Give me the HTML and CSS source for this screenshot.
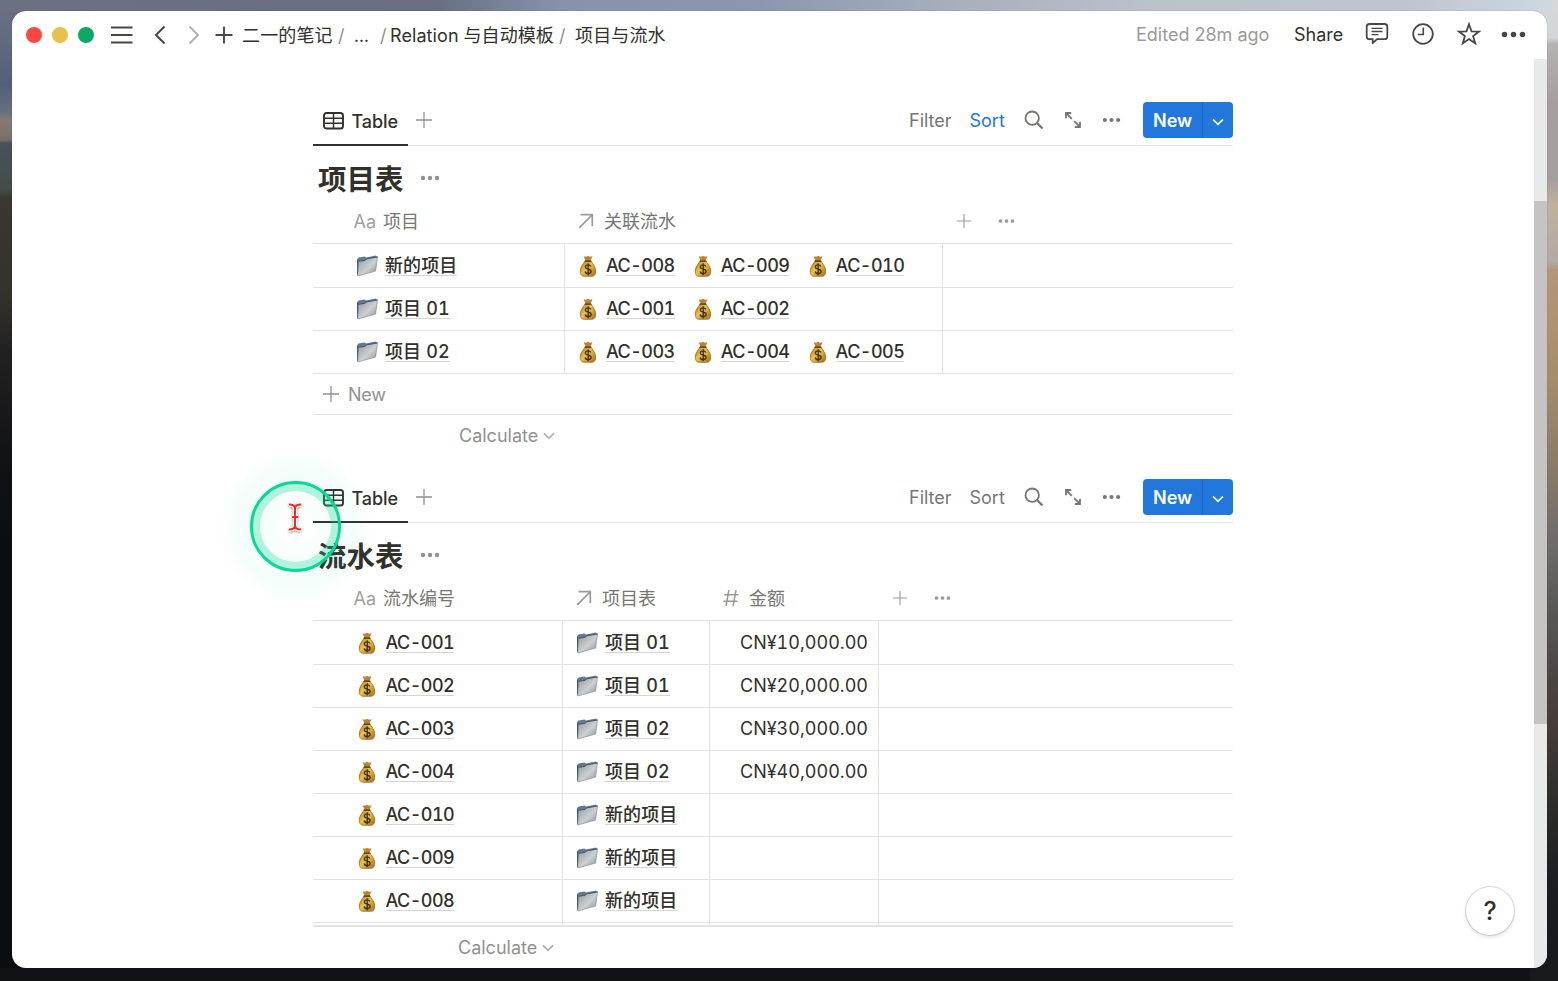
FILE: index.html
```html
<!DOCTYPE html>
<html lang="zh-CN">
<head>
<meta charset="utf-8">
<title>项目与流水</title>
<link rel="stylesheet" href="styles.css">
</head>
<body>
<svg class="defs" width="0" height="0">
  <defs>
    <linearGradient id="gold" x1="0" y1="0" x2="1" y2="1"><stop offset="0" stop-color="#b87a17"/><stop offset=".45" stop-color="#efc140"/><stop offset="1" stop-color="#a96a12"/></linearGradient>
    <linearGradient id="steel" x1="0" y1="0" x2="1" y2="1"><stop offset="0" stop-color="#8f989f"/><stop offset=".55" stop-color="#cdcfd0"/><stop offset="1" stop-color="#878e93"/></linearGradient>
    <symbol id="bag" viewBox="0 0 18 22"><path d="M4.600 1.200 7 1.800 9 .8l2 1 2.600-.5L11.300 6H6.700z" fill="#b98532"/><path d="M6.300 5.600h5.400c1 2.400 5 5.800 5 10.400 0 3.800-1.500 5.300-4 5.300H5.300c-2.500 0-4-1.500-4-5.300 0-4.600 4-8 5-10.400z" fill="url(#gold)" stroke="#9c6719" stroke-width=".8"/><path d="M5.800 6.200h6.400" stroke="#704512" stroke-width="1.600"/><path d="M11.800 11.500c-.4-1.100-1.500-1.700-2.700-1.700-1.500 0-2.700.8-2.700 2.100 0 3 5.700 1.500 5.700 4.400 0 1.400-1.300 2.300-2.900 2.300-1.600 0-2.700-.7-3-2.100M9.200 8.300v12" fill="none" stroke="#33312d" stroke-width="1.300"/></symbol>
    <symbol id="folder" viewBox="0 0 22 22"><path d="M1 4.200 2.500 2.500l6-1 1.500 1 10-2 1 1.500v3L1.600 19z" fill="#64788f"/><path d="M1 4.400v16L2.600 19V6z" fill="#405266"/><path d="M2.500 6.200 9 5.400l1.200-1.500 11.300-2-1.900 14.200L1.700 21z" fill="url(#steel)" stroke="#77838c" stroke-width=".6"/><path d="M2.500 6.200 9 5.400l1.200-1.500 11.300-2" fill="none" stroke="#415874" stroke-width="1"/></symbol>
    <symbol id="table" viewBox="0 0 22 18"><rect x="1" y="1" width="19" height="15.500" rx="2.600" fill="none" stroke="currentColor" stroke-width="1.900"/><path d="M1 6.200h19M1 11.300h19M10.500 1v15.500" fill="none" stroke="currentColor" stroke-width="1.500"/></symbol>
    <symbol id="plus" viewBox="0 0 16 16"><path d="M8 0v16M0 8h16" fill="none" stroke="currentColor" stroke-width="1.300"/></symbol>
    <symbol id="dots" viewBox="0 0 20 6"><circle cx="3" cy="3" r="2.200"/><circle cx="10" cy="3" r="2.200"/><circle cx="17" cy="3" r="2.200"/></symbol>
    <symbol id="search" viewBox="0 0 20 20"><circle cx="8.200" cy="8.200" r="6.700" fill="none" stroke="currentColor" stroke-width="1.800"/><path d="m13 13 5.500 5.500" stroke="currentColor" stroke-width="2.300"/></symbol>
    <symbol id="expand" viewBox="0 0 18 18"><path d="M2 7.200V2h5.200M2 2l5.800 5.800M10.800 16h5.200v-5.200M16 16l-5.800-5.800" fill="none" stroke="currentColor" stroke-width="1.800"/></symbol>
    <symbol id="chev" viewBox="0 0 12 8"><path d="m1 1.300 5 5 5-5" fill="none" stroke="currentColor" stroke-width="1.700"/></symbol>
    <symbol id="rel" viewBox="0 0 16 16"><path d="M1.200 14.800 14 2M2.500 1.700H14.300V13" fill="none" stroke="currentColor" stroke-width="1.700"/></symbol>
    <symbol id="num" viewBox="0 0 16 18"><path d="M5.900 1 3 17M13 1l-2.900 16M1.300 5.700h14M.5 12.300h14" fill="none" stroke="currentColor" stroke-width="1.500"/></symbol>
  </defs>
</svg>
<main class="window">
  <header class="topbar">
    <div class="lights"><i class="light red"></i><i class="light yellow"></i><i class="light green"></i></div>
    <svg class="menu" width="22" height="20" viewBox="0 0 22 20"><path d="M0 2.500h21.500M0 10h21.500M0 17.500h21.500" stroke="currentColor" stroke-width="1.900"/></svg>
    <svg class="back" width="12" height="20" viewBox="0 0 12 20"><path d="M10.500 1.500 2 10l8.500 8.500" fill="none" stroke="currentColor" stroke-width="2"/></svg>
    <svg class="forward" width="12" height="20" viewBox="0 0 12 20"><path d="M1.500 1.500 10 10l-8.500 8.500" fill="none" stroke="currentColor" stroke-width="2"/></svg>
    <svg class="add" width="18" height="18" viewBox="0 0 18 18"><path d="M9 .5v17M.5 9h17" stroke="currentColor" stroke-width="1.900"/></svg>
    <nav class="crumbs"><span class="c1">二一的笔记</span><span class="slash s1">/</span><span class="c2">...</span><span class="slash s2">/</span><span class="c3">Relation 与自动模板</span><span class="slash s3">/</span><span>项目与流水</span></nav>
    <div class="actions">
      <span class="edited">Edited 28m ago</span><span class="share">Share</span>
      <svg class="comment" width="24" height="24" viewBox="0 0 24 24"><path d="M4.500 2h15A2.800 2.800 0 0 1 22.300 4.800v9.600a2.800 2.800 0 0 1-2.800 2.800H12l-4.300 4v-4H4.500a2.800 2.800 0 0 1-2.800-2.800V4.800A2.800 2.800 0 0 1 4.500 2z" fill="none" stroke="currentColor" stroke-width="1.800" stroke-linejoin="round"/><path d="M6.500 6.300h11M6.500 9.500h11M6.500 12.700h7" stroke="currentColor" stroke-width="1.300"/></svg>
      <svg class="clock" width="24" height="24" viewBox="0 0 24 24"><circle cx="12" cy="12" r="9.800" fill="none" stroke="currentColor" stroke-width="1.800"/><path d="M12.300 5.500v7H6.800" fill="none" stroke="currentColor" stroke-width="1.600"/></svg>
      <svg class="star" width="24" height="24" viewBox="0 0 24 24"><path d="m12 2.200 2.500 7.100 7.600.2-6 4.600 2.100 7.200-6.200-4.200-6.200 4.200 2.100-7.200-6-4.600 7.600-.2z" fill="none" stroke="currentColor" stroke-width="1.800"/></svg>
      <svg class="more" width="25" height="7" viewBox="0 0 25 7"><circle cx="3.500" cy="3.500" r="2.800"/><circle cx="12.500" cy="3.500" r="2.800"/><circle cx="21.500" cy="3.500" r="2.800"/></svg>
    </div>
  </header>
  <div class="scroller">
    <div class="page">
      <section class="db projects">
        <div class="viewbar">
          <div class="tab"><svg width="22" height="18"><use href="#table"/></svg><span>Table</span></div><svg class="addview" width="16" height="16"><use href="#plus"/></svg>
          <div class="tools"><span class="filter">Filter</span><span class="sort active">Sort</span><svg class="t-search" width="20" height="20"><use href="#search"/></svg><svg class="t-expand" width="18" height="18"><use href="#expand"/></svg><svg class="t-dots" width="19" height="6"><use href="#dots"/></svg><div class="new"><b>New</b><span><svg width="12" height="8"><use href="#chev"/></svg></span></div></div>
        </div>
        <h2 class="title"><span>项目表</span><svg width="20" height="6"><use href="#dots"/></svg></h2>
        <div class="row head"><div class="name"><em>Aa</em><span>项目</span></div><div class="hc"><svg width="16" height="16"><use href="#rel"/></svg><span>关联流水</span></div><div class="extra"><svg width="14" height="14"><use href="#plus"/></svg><svg width="17" height="6"><use href="#dots"/></svg></div></div>
        <div class="row first"><div class="name"><svg class="fold"><use href="#folder"/></svg><a>新的项目</a></div><div class="rels"><p><svg class="bag"><use href="#bag"/></svg><a>AC-008</a></p><p><svg class="bag"><use href="#bag"/></svg><a>AC-009</a></p><p><svg class="bag"><use href="#bag"/></svg><a>AC-010</a></p></div><div></div></div>
        <div class="row"><div class="name"><svg class="fold"><use href="#folder"/></svg><a>项目 01</a></div><div class="rels"><p><svg class="bag"><use href="#bag"/></svg><a>AC-001</a></p><p><svg class="bag"><use href="#bag"/></svg><a>AC-002</a></p></div><div></div></div>
        <div class="row"><div class="name"><svg class="fold"><use href="#folder"/></svg><a>项目 02</a></div><div class="rels"><p><svg class="bag"><use href="#bag"/></svg><a>AC-003</a></p><p><svg class="bag"><use href="#bag"/></svg><a>AC-004</a></p><p><svg class="bag"><use href="#bag"/></svg><a>AC-005</a></p></div><div></div></div>
        <div class="newrow"><svg width="16" height="16"><use href="#plus"/></svg><span>New</span></div>
        <div class="calc"><span>Calculate</span><svg width="12" height="8"><use href="#chev"/></svg></div>
      </section>
      <section class="db flows">
        <div class="viewbar">
          <div class="tab"><svg width="22" height="18"><use href="#table"/></svg><span>Table</span></div><svg class="addview" width="16" height="16"><use href="#plus"/></svg>
          <div class="tools"><span class="filter">Filter</span><span class="sort">Sort</span><svg class="t-search" width="20" height="20"><use href="#search"/></svg><svg class="t-expand" width="18" height="18"><use href="#expand"/></svg><svg class="t-dots" width="19" height="6"><use href="#dots"/></svg><div class="new"><b>New</b><span><svg width="12" height="8"><use href="#chev"/></svg></span></div></div>
        </div>
        <h2 class="title"><span>流水表</span><svg width="20" height="6"><use href="#dots"/></svg></h2>
        <div class="row head"><div class="name"><em>Aa</em><span>流水编号</span></div><div class="hc"><svg width="16" height="16"><use href="#rel"/></svg><span>项目表</span></div><div class="hc"><svg width="16" height="18"><use href="#num"/></svg><span>金额</span></div><div class="extra"><svg width="14" height="14"><use href="#plus"/></svg><svg width="17" height="6"><use href="#dots"/></svg></div></div>
        <div class="row first"><div class="name"><svg class="bag"><use href="#bag"/></svg><a>AC-001</a></div><div class="rel"><svg class="fold"><use href="#folder"/></svg><a>项目 01</a></div><div class="amt">CN¥10,000.00</div><div></div></div>
        <div class="row"><div class="name"><svg class="bag"><use href="#bag"/></svg><a>AC-002</a></div><div class="rel"><svg class="fold"><use href="#folder"/></svg><a>项目 01</a></div><div class="amt">CN¥20,000.00</div><div></div></div>
        <div class="row"><div class="name"><svg class="bag"><use href="#bag"/></svg><a>AC-003</a></div><div class="rel"><svg class="fold"><use href="#folder"/></svg><a>项目 02</a></div><div class="amt">CN¥30,000.00</div><div></div></div>
        <div class="row"><div class="name"><svg class="bag"><use href="#bag"/></svg><a>AC-004</a></div><div class="rel"><svg class="fold"><use href="#folder"/></svg><a>项目 02</a></div><div class="amt">CN¥40,000.00</div><div></div></div>
        <div class="row"><div class="name"><svg class="bag"><use href="#bag"/></svg><a>AC-010</a></div><div class="rel"><svg class="fold"><use href="#folder"/></svg><a>新的项目</a></div><div class="amt"></div><div></div></div>
        <div class="row"><div class="name"><svg class="bag"><use href="#bag"/></svg><a>AC-009</a></div><div class="rel"><svg class="fold"><use href="#folder"/></svg><a>新的项目</a></div><div class="amt"></div><div></div></div>
        <div class="row"><div class="name"><svg class="bag"><use href="#bag"/></svg><a>AC-008</a></div><div class="rel"><svg class="fold"><use href="#folder"/></svg><a>新的项目</a></div><div class="amt"></div><div></div></div>
        <div class="row cut"><div class="name"></div><div class="rel"></div><div class="amt"></div><div></div></div>
        <div class="calc"><span>Calculate</span><svg width="12" height="8"><use href="#chev"/></svg></div>
      </section>
    </div>
    <div class="track"><div class="thumb"></div></div>
  </div>
  <button class="help">?</button>
</main>
<div class="halo"></div>
<div class="pointer"><svg width="18" height="32" viewBox="0 0 18 32"><path d="M3 2.500c3 0 6 1 6 4 0-3 3-4 6-4M9 6v20M3 27.500c3 0 6-1 6-4 0 3 3 4 6 4M6 15h6" fill="none" stroke="#fff" stroke-width="4.500"/><path d="M3 2.500c3 0 6 1 6 4 0-3 3-4 6-4M9 6v20M3 27.500c3 0 6-1 6-4 0 3 3 4 6 4M6 15h6" fill="none" stroke="#f5291d" stroke-width="2"/></svg></div>
</body>
</html>
```

FILE: styles.css
```css
* { box-sizing: border-box; }
body {
  margin: 0; width: 1558px; height: 981px; overflow: hidden; padding: 11px 11px 13px 12px;
  font-family: Inter, "Noto Sans CJK SC", sans-serif; font-size: 18px; color: #32302c;
  font-variant-numeric: tabular-nums;
  background:
    linear-gradient(90deg, #6b7183 0, #697083 440px, #8693ac 560px, #8a97ae 760px, #a7afbd 950px, #bcc1ca 1150px, #bfc4ce 1400px, #c9d5e2 1530px, #d5d9dc 1558px) 0 0 / 100% 12px no-repeat,
    linear-gradient(#101216, #101216) 0 100% / 1530px 13px no-repeat,
    linear-gradient(180deg, #6b7183 0, #606b80 40px, #50607a 85px, #68707d 112px, #857b73 120px, #776f68 140px, #47535a 143px, #454c49 190px, #39372f 198px, #34332b 290px, #222122 350px, #121315 450px, #0b0e11 540px) 0 0 / 30px 981px no-repeat,
    linear-gradient(180deg, #d5d9dc 0, #d3d5d6 38px, #b5b2b2 44px, #a79f9f 100px, #a59fa0 180px, #c0b19c 205px, #b3a8a6 262px, #b4977a 270px, #a58c6c 380px, #8b7c66 460px, #706c6b 540px, #5a5a59 600px, #4b4542 680px, #443b39 730px, #302f2b 790px, #1d1e22 880px, #18191d 960px) 100% 0 / 30px 981px no-repeat,
    #101216;
}
svg { display: block; flex: none; fill: currentColor; overflow: visible; }
.defs { position: absolute; }
.window { position: relative; height: 957px; background: #fff; border-radius: 14px; overflow: hidden; box-shadow: 0 0 1px #0008; display: flex; flex-direction: column; }
.topbar { height: 48px; flex: none; display: flex; align-items: center; padding-left: 14px; }
.lights { display: flex; gap: 10px; }
.light { width: 16px; height: 16px; border-radius: 50%; }
.red { background: #fe4740; } .yellow { background: #e8c04c; } .green { background: #0ba968; }
.menu, .back, .forward, .add { color: #484744; }
.menu { margin-left: 17px; }
.back { margin-left: 21px; }
.forward { margin-left: 22px; color: #b2b1af; }
.add { margin-left: 15px; }
.crumbs { display: flex; align-items: center; margin-left: 9px; padding-top: 2px; white-space: nowrap; letter-spacing: .15px; }
.crumbs span { line-height: 24px; }
.crumbs .slash { color: #91908d; }
.c1 { width: 96px; } .s1 { width: 16px; } .c2 { width: 26px; } .s2 { width: 10px; } .c3 { width: 169px; letter-spacing: .08px; } .s3 { width: 16px; }
.actions { margin-left: auto; display: flex; align-items: center; padding: 0 21px 2px 0; font-variant-numeric: normal; }
.edited { color: #9b9a97; width: 158px; white-space: nowrap; }
.share { width: 71px; }
.comment, .clock, .star, .more { color: #484744; }
.clock { margin-left: 22px; } .star { margin-left: 22px; } .more { margin-left: 20px; }
.scroller { flex: 1; display: flex; justify-content: space-between; min-height: 0; }
.page { margin-left: 301px; width: 920px; padding-top: 36px; }
.track { width: 13px; background: #e8eae9; padding-top: 142px; }
.thumb { height: 523px; background: #c6c4c3; }
.db { height: 377px; }
.viewbar { height: 51px; display: flex; align-items: center; border-bottom: 1px solid #e4e4e3; }
.tab { width: 95px; height: 51px; display: flex; align-items: center; gap: 6.500px; padding-left: 10px; border-bottom: 2px solid #32302c; margin-bottom: -1px; font-weight: 500; letter-spacing: -.1px; }
.tab svg { margin-top: 3px; }
.tab span { padding-top: 3px; }
.addview { margin-left: 8px; color: #92918e; }
.tools { margin-left: auto; display: flex; align-items: center; color: #777673; }
.filter { width: 60.500px; } .sort { width: 54px; }
.filter, .sort { padding-top: 1px; }
.active { color: #2078dc; }
.t-search { margin-right: 20px; } .t-expand { margin-right: 20px; } .t-dots { margin-right: 22.500px; }
.new { width: 90px; height: 36px; background: #2177dc; border-radius: 4px; color: #fff; display: flex; }
.new b { width: 60px; border-right: 1px solid #2168bd; padding-left: 10px; line-height: 38px; font-weight: 600; }
.new span { flex: 1; display: grid; place-items: center; padding: 3px 1px 0 0; }
.title { margin: 0; height: 53px; padding: 13px 0 0 5px; display: flex; align-items: center; gap: 16px; font-size: 28.500px; line-height: 40px; font-weight: 700; }
.title span { padding-top: 2px; }
.title svg { color: #92918e; margin-bottom: 2px; }
.row { display: grid; height: 43px; border-bottom: 1px solid #e4e4e3; }
.row.first { height: 44px; }
.row.first > div { padding-top: 1px; }
.row.head { height: 45px; color: #777673; }
.row.head > div { padding-bottom: 1px; }
.head span { margin-top: -1px; }
.head em { margin-top: 1px; }
.projects .row { grid-template-columns: 252px 378px 1fr; }
.flows .row { grid-template-columns: 250px 147px 169px 1fr; }
.row > div { display: flex; align-items: center; border-right: 1px solid #e4e4e3; white-space: nowrap; }
.row > div:last-child, .row.head > div { border-right: 0; }
.row .name { padding-left: 43px; }
.head .name { padding-left: 40.500px; }
.name em { font-style: normal; color: #a09f9c; width: 29.500px; }
.hc { padding-left: 13px; gap: 10px; }
.hc svg, .extra svg { color: #9b9a97; }
.extra { padding-left: 14px; gap: 26.500px; }
.fold { width: 22px; height: 22px; }
.bag { width: 18px; height: 22px; }
.row a { font-weight: 550; line-height: 19px; border-bottom: 1px solid #d5d4d2; letter-spacing: .1px; }
.row .bag + a { letter-spacing: -.55px; }
.name .fold { margin-left: -.5px; }
.name .fold + a { margin-left: 7.500px; }
.name .bag { margin-left: 2px; }
.name .bag + a { margin-left: 9.500px; }
.rels { padding-left: 14px; }
.rels p { margin: 0; width: 114.800px; display: flex; align-items: center; gap: 9px; }
.rel { padding-left: 12.500px; }
.rel a { margin-left: 7.500px; }
.flows .amt { justify-content: flex-end; padding-right: 10px; padding-bottom: 1px; }
.newrow { height: 41px; border-bottom: 1px solid #e4e4e3; display: flex; align-items: center; gap: 9px; padding-left: 10px; color: #92918e; }
.newrow span { letter-spacing: -.25px; }
.calc { height: 41px; display: flex; align-items: center; color: #92918e; padding-left: 146px; gap: 5px; }
.calc svg { color: #b0afac; }
.flows .calc { padding-left: 145px; }
.row.cut { height: 4px; border-bottom: 2px solid #e4e4e3; }
.row.cut > div { padding: 0; }
.help { position: absolute; left: 1454px; top: 876px; width: 48px; height: 48px; border-radius: 50%; border: 0; background: #fff; box-shadow: 0 0 0 1px #0002, 0 2px 4px #0002; font: 500 25px Inter, sans-serif; color: #32302c; padding: 0; }
.halo { position: absolute; left: 215px; top: 446px; width: 161px; height: 161px; border-radius: 50%; background: radial-gradient(circle, #00dc9600 0, #00dc960d 46px, #00dc960a 60px, #00dc9600 78px); }
.pointer { position: absolute; left: 250px; top: 481px; width: 91px; height: 91px; border-radius: 50%; border: 3px solid #08d894; box-shadow: inset 0 0 0 7px #08d89448; }
.pointer svg { margin: 18px 0 0 33px; filter: drop-shadow(0 1px 1px #0006); }
```
